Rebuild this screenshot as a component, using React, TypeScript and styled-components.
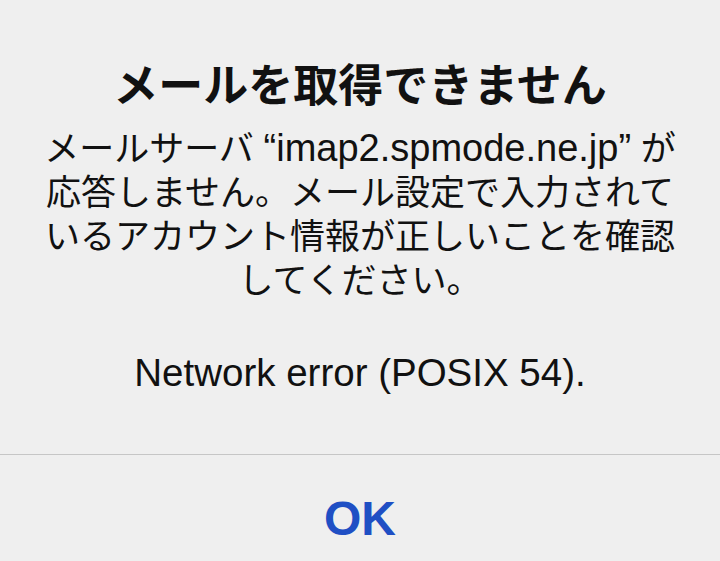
import React from "react";
import styled, { createGlobalStyle } from "styled-components";

const GlobalStyle = createGlobalStyle`
  html, body {
    margin: 0;
    padding: 0;
    background: #efefef;
  }
  body {
    font-family: "Liberation Sans", "Noto Sans CJK JP", sans-serif;
    -webkit-font-smoothing: antialiased;
  }
`;

const App: React.FC = () => {
  return (
    <>
      <GlobalStyle />
      <AlertSheet>
        <AlertBody>
          <AlertTitle>メールを取得できません</AlertTitle>
          <AlertMessage>
            メールサーバ <Host>“imap2.spmode.ne.jp”</Host> が
            <br />
            応答しません。メール設定で入力されて
            <br />
            いるアカウント情報が正しいことを確認
            <br />
            してください。
          </AlertMessage>
          <AlertDetail>Network error (POSIX 54).</AlertDetail>
        </AlertBody>
        <AlertActions>
          <ActionButton type="button">OK</ActionButton>
        </AlertActions>
      </AlertSheet>
    </>
  );
};
export default App;

const AlertSheet = styled.div`
  display: flex;
  flex-direction: column;
  width: 720px;
  height: 561px;
  overflow: hidden;
  background: #efefef;
  color: #111;
`;

const AlertBody = styled.div`
  display: flex;
  flex-direction: column;
  align-items: center;
  padding: 56px 0 59px;
  text-align: center;
`;

const AlertTitle = styled.h1`
  margin: 0;
  font-family: "Noto Sans CJK JP", sans-serif;
  font-size: 45px;
  font-weight: 700;
  line-height: 53px;
  white-space: nowrap;
`;

const AlertMessage = styled.p`
  margin: 17px 0 0;
  font-size: 35px;
  font-weight: 400;
  line-height: 44px;
  white-space: nowrap;
`;

const Host = styled.span`
  font-size: 38px;
  line-height: 44px;
`;

const AlertDetail = styled.p`
  margin: 48px 0 0;
  font-size: 38.5px;
  line-height: 44px;
  white-space: nowrap;
`;

const AlertActions = styled.div`
  display: flex;
  justify-content: center;
  border-top: 1px solid #c6c6c6;
  padding-top: 34px;
`;

const ActionButton = styled.button`
  border: none;
  background: none;
  padding: 0;
  font-family: "Liberation Sans", sans-serif;
  font-size: 48px;
  font-weight: 700;
  line-height: 60px;
  color: #1f4fc4;
  cursor: pointer;
`;
